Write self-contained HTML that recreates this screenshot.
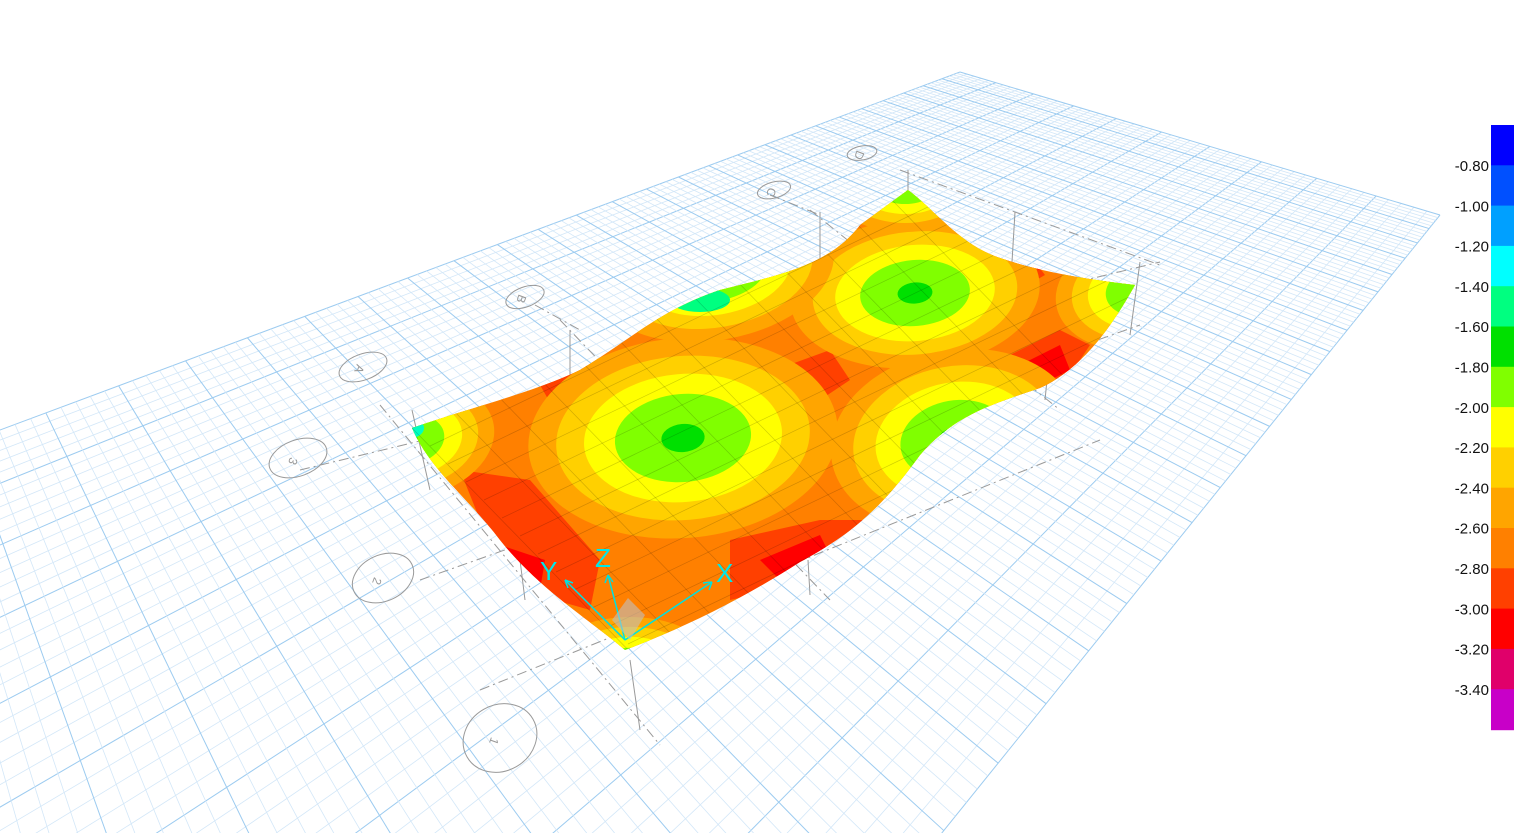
<!DOCTYPE html>
<html><head><meta charset="utf-8"><style>
html,body{margin:0;padding:0;background:#fff;overflow:hidden;width:1519px;height:833px}
svg{display:block}
</style></head><body>
<svg id="s" width="1519" height="833" viewBox="0 0 1519 833" xmlns="http://www.w3.org/2000/svg" font-family="Liberation Sans, sans-serif">
<g id="grid"></g>
<defs>
<clipPath id="slab"><path d="M412,428 C470,408 540,390 580,370 C630,340 660,310 720,290 C780,275 830,265 860,225 L908,190 C935,210 960,245 1000,258 C1040,272 1090,280 1135,285 C1110,330 1080,370 1040,388 C990,405 955,415 920,455 C880,510 850,535 800,562 C740,600 690,625 625,650 C590,620 540,590 500,540 C470,500 430,470 412,428 Z"/></clipPath>
</defs>
<g stroke="#999" stroke-width="1" stroke-dasharray="10,4,2,4" fill="none">
<line x1="300" y1="470" x2="1160" y2="262"/>
<line x1="420" y1="580" x2="1140" y2="325"/>
<line x1="480" y1="690" x2="1100" y2="440"/>
<line x1="380" y1="405" x2="660" y2="745"/>
<line x1="560" y1="320" x2="830" y2="600"/>
<line x1="810" y1="210" x2="1060" y2="410"/>
<line x1="900" y1="170" x2="1160" y2="265"/>
<line x1="535" y1="305" x2="580" y2="330"/>
<line x1="770" y1="195" x2="820" y2="215"/>
</g>
<g stroke="#999" fill="none" stroke-width="1">
<line x1="570" y1="330" x2="570" y2="385"/><line x1="820" y1="212" x2="820" y2="262"/>
<line x1="1015" y1="212" x2="1012" y2="262"/><line x1="1140" y1="262" x2="1130" y2="335"/>
<line x1="412" y1="410" x2="430" y2="490"/><line x1="520" y1="560" x2="525" y2="600"/>
<line x1="630" y1="660" x2="640" y2="730"/><line x1="808" y1="560" x2="810" y2="595"/>
<line x1="1048" y1="370" x2="1045" y2="400"/><line x1="908" y1="170" x2="908" y2="190"/>
<ellipse cx="298" cy="458" rx="30" ry="18" transform="rotate(-20 298 458)"/>
<ellipse cx="383" cy="578" rx="32" ry="23" transform="rotate(-25 383 578)"/>
<ellipse cx="500" cy="738" rx="38" ry="33" transform="rotate(-30 500 738)"/>
<ellipse cx="363" cy="367" rx="25" ry="13" transform="rotate(-20 363 367)"/>
<ellipse cx="525" cy="297" rx="20" ry="10" transform="rotate(-20 525 297)"/>
<ellipse cx="774" cy="190" rx="17" ry="8" transform="rotate(-15 774 190)"/>
<ellipse cx="862" cy="153" rx="15" ry="7" transform="rotate(-10 862 153)"/>
</g>
<g fill="#999" font-size="12">
<text x="294" y="462" transform="rotate(110 294 458)">3</text>
<text x="378" y="582" transform="rotate(110 378 578)">2</text>
<text x="495" y="742" transform="rotate(110 495 738)">1</text>
<text x="358" y="371" transform="rotate(110 360 367)">A</text>
<text x="520" y="301" transform="rotate(110 522 297)">B</text>
<text x="770" y="194" transform="rotate(110 772 190)">C</text>
<text x="858" y="157" transform="rotate(110 860 153)">D</text>
</g>
<g clip-path="url(#slab)">
<rect x="400" y="180" width="750" height="480" fill="#ff8000"/>
<g id="blobs"></g>
</g>
<g stroke="#00e0e0" stroke-width="1.5" fill="none">
<line x1="625" y1="640" x2="565" y2="580"/><line x1="625" y1="640" x2="712" y2="582"/><line x1="625" y1="640" x2="608" y2="575"/>
<path d="M565,580 l3,8 M565,580 l8,3 M712,582 l-9,1 M712,582 l-3,8 M608,575 l-3,8 M608,575 l5,7"/>
</g>
<polygon points="612,620 628,598 645,615 630,640" fill="#c0c0c0" opacity="0.6"/>
<g fill="#00e8e8" font-size="26"><text x="540" y="580">Y</text><text x="595" y="567">Z</text><text x="716" y="582">X</text></g>
<g id="legend"></g>
</svg>
<script>
var ns="http://www.w3.org/2000/svg";
function el(t,a,p){var e=document.createElementNS(ns,t);for(var k in a)e.setAttribute(k,a[k]);p.appendChild(e);return e;}
// homography unit square -> quad A,B,C,D
var Q=[[960,72],[1440,215],[-805,3000],[-437,593]];
function homog(q){var x0=q[0][0],y0=q[0][1],x1=q[1][0],y1=q[1][1],x2=q[2][0],y2=q[2][1],x3=q[3][0],y3=q[3][1];
var dx1=x1-x2,dx2=x3-x2,dy1=y1-y2,dy2=y3-y2,sx=x0-x1+x2-x3,sy=y0-y1+y2-y3;
var den=dx1*dy2-dx2*dy1;var g=(sx*dy2-dx2*sy)/den,h=(dx1*sy-sx*dy1)/den;
var a=x1-x0+g*x1,b=x3-x0+h*x3,c=x0,d=y1-y0+g*y1,e=y3-y0+h*y3,f=y0;
return function(u,v){var w=g*u+h*v+1;return [(a*u+b*v+c)/w,(d*u+e*v+f)/w];};}
var P=homog(Q);
var gg=document.getElementById('grid');
var NU=50,NV=150;
function ln(p,q,maj){el('line',{x1:p[0],y1:p[1],x2:q[0],y2:q[1],stroke:maj?'#9ccbf0':'#d3e7f8','stroke-width':maj?1:0.8},gg);}
for(var i=0;i<=NU;i++){var t=i/NU;ln(P(t,0),P(t,1),i%5==0);}
for(var i=0;i<=NV;i++){var t=i/NV;ln(P(0,t),P(1,t),i%5==0);}
// blobs
var b=document.getElementById('blobs');
function red(pts,c){el('polygon',{points:pts,fill:c},b);}
red("540,385 600,360 640,370 600,420 560,420","#ff4000");
red("775,370 830,350 850,380 820,400 790,395","#ff4000");
red("960,250 1030,255 1045,275 1010,295","#ff4000");
red("990,250 1020,245 1040,270","#ff0000");
red("1000,360 1060,330 1090,345 1060,390 1010,380","#ff4000");
red("1020,365 1060,345 1070,370 1040,385","#ff0000");
red("460,470 530,480 600,560 590,610 520,590 480,520","#ff4000");
red("500,545 545,560 540,590","#ff0000");
red("730,540 820,520 870,520 820,580 730,600","#ff4000");
red("760,560 820,535 830,555 790,590","#ff0000");
var bands=['#ffa500','#ffd000','#ffff00','#80ff00','#00e000'];
var fr=[1,0.82,0.64,0.44,0.14];
function blob(cx,cy,rx,ry,rot){for(var i=0;i<5;i++){var f=fr[i];el('ellipse',{cx:cx,cy:cy,rx:rx*f,ry:ry*f,fill:bands[i],transform:'rotate('+rot+' '+cx+' '+cy+')'},b);}}
blob(683,438,155,100,-5);
blob(915,293,125,75,-5);
blob(955,440,125,90,-10);
blob(715,270,120,70,-10);
blob(405,440,90,60,-10);
blob(1145,290,90,60,-10);
blob(905,182,80,50,0);
blob(630,672,90,55,0);
el('ellipse',{cx:410,cy:428,rx:14,ry:10,fill:'#00ffc0'},b);
el('ellipse',{cx:700,cy:300,rx:30,ry:12,fill:'#00ff80'},b);
// faint mesh
var m=el('g',{stroke:'#000','stroke-opacity':0.18,'stroke-width':0.7},b);
for(var i=-12;i<=12;i++){el('line',{x1:412+i*40,y1:428-i*19,x2:625+i*40+500,y2:650-i*19+500*1.02},m);
el('line',{x1:412+i*18,y1:428+i*18,x2:412+i*18+1000,y2:428+i*18-480},m);}
// legend
var L=document.getElementById('legend');
var cols=['#0000ff','#0050ff','#00a0ff','#00ffff','#00ff80','#00e000','#80ff00','#ffff00','#ffd000','#ffa500','#ff8000','#ff4000','#ff0000','#e0006a','#c800c8'];
var labs=['-0.80','-1.00','-1.20','-1.40','-1.60','-1.80','-2.00','-2.20','-2.40','-2.60','-2.80','-3.00','-3.20','-3.40'];
for(var i=0;i<15;i++)el('rect',{x:1491,y:125+i*40.3,width:23,height:41,fill:cols[i]},L);
for(var i=0;i<14;i++){var t=el('text',{x:1489,y:171+i*40.3,'text-anchor':'end','font-size':15,fill:'#111'},L);t.textContent=labs[i];}
</script>
</body></html>
